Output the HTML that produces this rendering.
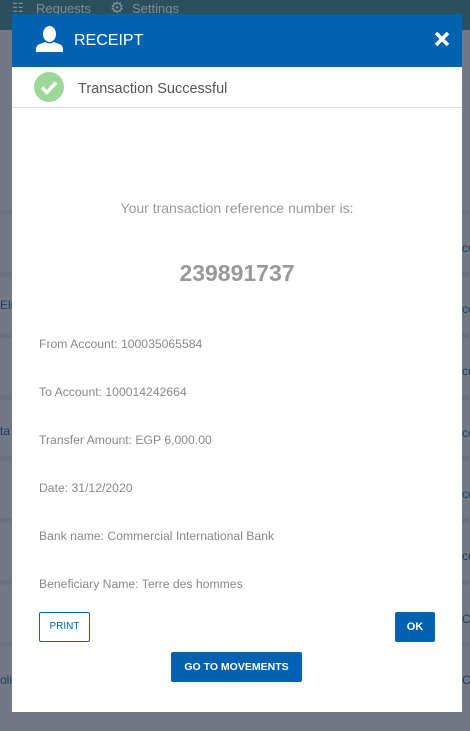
<!DOCTYPE html>
<html><head><style>
body{margin:0;width:470px;height:731px;background:#737885;position:relative;overflow:hidden;font-family:"Liberation Sans",sans-serif}
.top{position:absolute;left:0;top:0;width:470px;height:30px;background:#2c4f5f;color:#7a8f99;font-size:13px}
.top span{position:absolute;top:0}
.row{position:absolute;left:0;width:470px;height:5px;background:#6c717e}
.modal{position:absolute;left:12px;top:14px;width:450px;height:698px;background:#fff}
.hdr{height:53px;background:#0062b0;position:relative;color:#fff}
.hdr .t{position:absolute;left:62px;top:18px;font-size:16px}
.st{height:40px;border-bottom:1px solid #ddd;position:relative}
.st .t{position:absolute;left:66px;top:14px;font-size:14.5px;color:#555}
.d{position:absolute;left:27px;font-size:12.2px;color:#888}
.btn{position:absolute;font-size:11px;box-sizing:border-box;text-align:center;border-radius:2px}
.side{position:absolute;font-size:12px;color:#1f3e63}
</style></head><body>
<div class="top"><span style="left:12px">☷</span><span style="left:36px;top:1px">Requests</span><span style="left:110px;font-size:16px;top:-2px">⚙</span><span style="left:132px;top:1px">Settings</span></div>
<div class="row" style="top:210px"></div><div class="row" style="top:272px"></div><div class="row" style="top:333px"></div><div class="row" style="top:395px"></div><div class="row" style="top:456px"></div><div class="row" style="top:518px"></div><div class="row" style="top:580px"></div><div class="row" style="top:642px"></div>
<div class="side" style="left:0;top:298px">Els</div><div class="side" style="left:0;top:424px">ta</div><div class="side" style="left:0;top:673px">oli</div>
<div class="side" style="left:462px;top:241px">co</div><div class="side" style="left:462px;top:302px">co</div><div class="side" style="left:462px;top:364px">co</div><div class="side" style="left:462px;top:426px">co</div><div class="side" style="left:462px;top:487px">co</div><div class="side" style="left:462px;top:549px">co</div><div class="side" style="left:462px;top:612px">C</div><div class="side" style="left:462px;top:673px">C</div>
<div class="modal">
<div class="hdr">
<svg style="position:absolute;left:24px;top:12px" width="27" height="26" viewBox="0 0 27 26"><ellipse cx="13.5" cy="8" rx="6.5" ry="8" fill="#fff"/><path d="M0 26 L0 22 Q1 18 7 17 L9 16 Q13.5 19 18 16 L20 17 Q26 18 27 22 L27 26Z" fill="#fff"/></svg>
<div class="t">RECEIPT</div>
<svg style="position:absolute;left:422px;top:17px" width="16" height="16" viewBox="0 0 16 16"><path d="M2 2L14 14M14 2L2 14" stroke="#fff" stroke-width="3.5"/></svg>
</div>
<div class="st">
<svg style="position:absolute;left:22px;top:5px" width="30" height="30" viewBox="0 0 30 30"><circle cx="15" cy="15" r="15" fill="#9dd89a"/><path d="M8 15.5L13 20.5L22 10.5" stroke="#fff" stroke-width="3.5" fill="none"/></svg>
<div class="t">Transaction Successful</div>
</div>
<div style="position:absolute;top:186px;width:450px;text-align:center;font-size:14px;color:#999">Your transaction reference number is:</div>
<div style="position:absolute;top:246px;width:450px;text-align:center;font-size:23px;color:#999;font-weight:bold">239891737</div>
<div class="d" style="top:323px">From Account: 100035065584</div>
<div class="d" style="top:371px">To Account: 100014242664</div>
<div class="d" style="top:419px">Transfer Amount: EGP 6,000.00</div>
<div class="d" style="top:467px">Date: 31/12/2020</div>
<div class="d" style="top:515px">Bank name: Commercial International Bank</div>
<div class="d" style="top:563px">Beneficiary Name: Terre des hommes</div>
<div class="btn" style="left:27px;top:598px;width:51px;height:30px;border:1px solid #0062b0;color:#0062b0;line-height:28px;font-size:10px">PRINT</div>
<div class="btn" style="left:383px;top:598px;width:40px;height:30px;background:#0062b0;color:#fff;line-height:30px;font-weight:bold">OK</div>
<div class="btn" style="left:159px;top:638px;width:131px;height:30px;background:#0062b0;color:#fff;line-height:30px;font-weight:bold;font-size:10.5px">GO TO MOVEMENTS</div>
</div>
</body></html>
